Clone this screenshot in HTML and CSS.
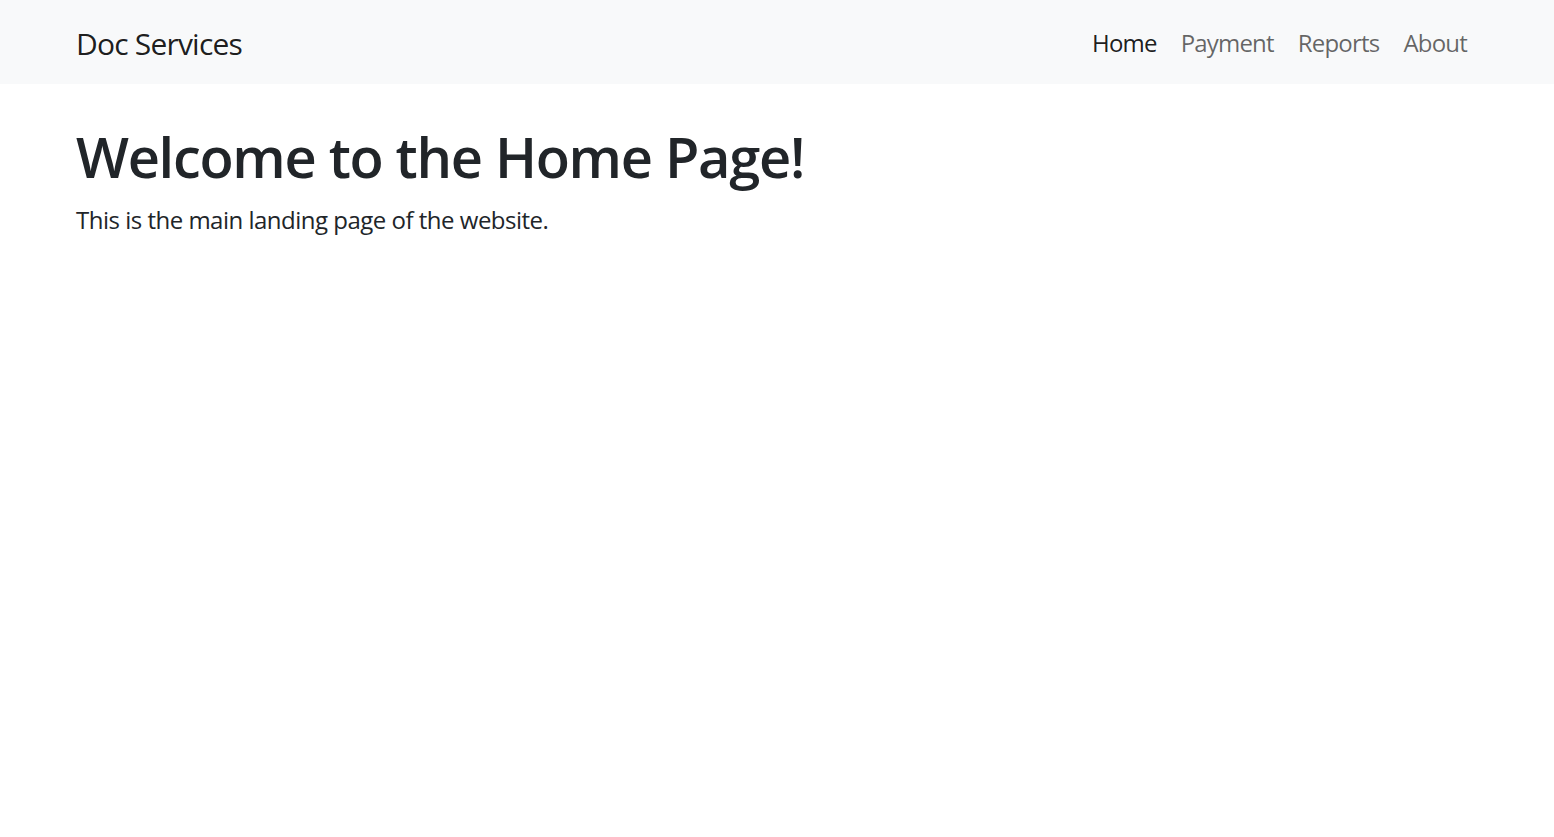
FILE: index.html
```html
<!DOCTYPE html>
<html lang="en">
<head>
<meta charset="utf-8">
<title>Doc Services</title>
<link rel="stylesheet" href="styles.css">
</head>
<body>
<nav class="navbar">
  <div class="container nav-inner">
    <a class="brand" href="#">Doc Services</a>
    <ul class="nav-links">
      <li><a class="nav-link active" href="#">Home</a></li>
      <li><a class="nav-link" href="#">Payment</a></li>
      <li><a class="nav-link" href="#">Reports</a></li>
      <li><a class="nav-link" href="#">About</a></li>
    </ul>
  </div>
</nav>
<main class="container main">
  <h1 class="title">Welcome to the Home Page!</h1>
  <p class="lead-text">This is the main landing page of the website.</p>
</main>
</body>
</html>
```
FILE: styles.css
```css
* { box-sizing: border-box; }
html, body { margin: 0; padding: 0; }
body {
  font-family: "Open Sans", "Noto Sans", sans-serif;
  font-size: 24px;
  line-height: 1.5;
  color: #212529;
  background: #fff;
}
.container {
  padding: 0 75px 0 76px;
}
.navbar {
  background: #f8f9fa;
  padding: 13px 0 11px;
}
.nav-inner {
  display: flex;
  align-items: center;
  justify-content: space-between;
}
.brand {
  font-size: 30px;
  line-height: 45px;
  padding: 7.5px 0;
  color: rgba(0,0,0,.9);
  text-decoration: none;
  letter-spacing: -0.8px;
}
.nav-links {
  display: flex;
  list-style: none;
  margin: 0;
  padding: 0;
}
.nav-link {
  display: block;
  padding: 12px 12px;
  font-size: 24px;
  line-height: 36px;
  color: rgba(0,0,0,.6);
  text-decoration: none;
  letter-spacing: -0.8px;
}
.nav-link.active { color: rgba(0,0,0,.9); }
.main { padding-top: 39px; }
.title {
  margin: 0 0 12px;
  font-size: 56px;
  font-weight: 600;
  line-height: 1.2;
  letter-spacing: -1.3px;
}
.lead-text {
  margin: 0;
  font-size: 24px;
  line-height: 36px;
  letter-spacing: -0.5px;
}
```
